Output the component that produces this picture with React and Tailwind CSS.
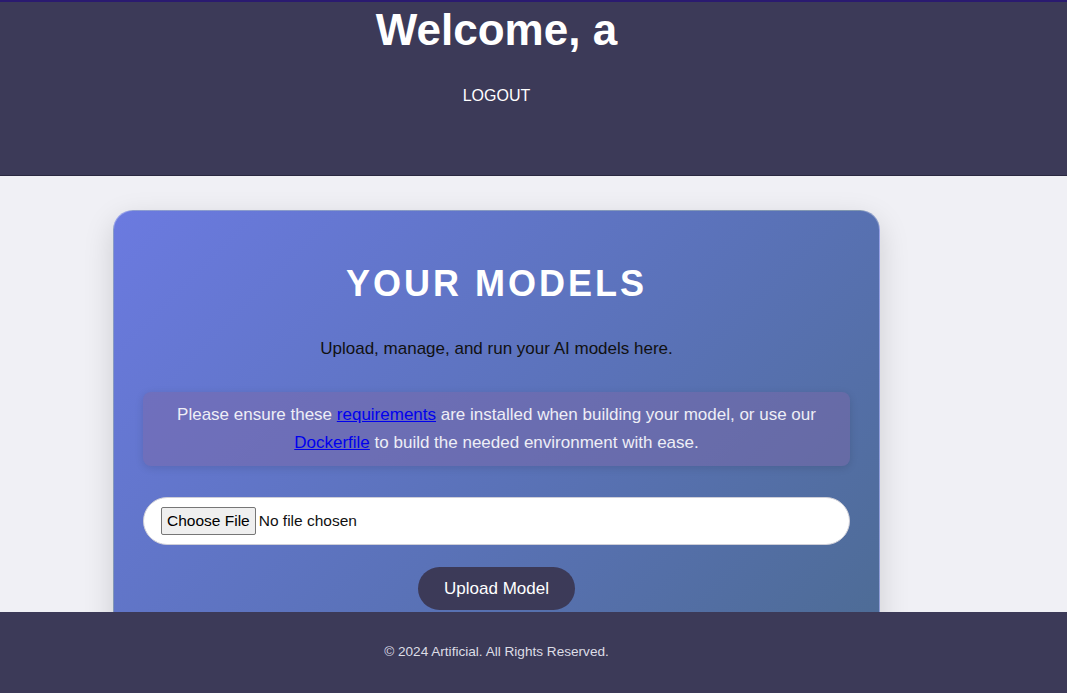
import React from "react";

const font = { fontFamily: '"Liberation Sans", Arial, sans-serif' };

const Header = () => (
  <header className="bg-[#3c3a58] border-t-2 border-t-[#2a1a70] border-b border-b-[#2a2840] h-[176px]">
    <div className="w-[993px] flex flex-col items-center">
      <h1 className="text-[44px] font-bold text-white leading-[52px] mt-[2px]">Welcome, a</h1>
      <button className="mt-[30px] text-white text-[16px] leading-[20px] uppercase">Logout</button>
    </div>
  </header>
);

const ModelsCard = () => (
  <div className="w-[767px] mx-auto mt-[34px] rounded-[20px] border border-white/30 bg-[linear-gradient(135deg,#6b7ae0_0%,#5a72b8_50%,#4a6a8c_100%)] shadow-[0_10px_30px_rgba(0,0,0,0.15)] px-[29px] pt-[51px] pb-[40px] flex flex-col items-center">
    <h2 className="text-[36px] font-bold text-white tracking-[3px] leading-[44px]">YOUR MODELS</h2>
    <p className="mt-[32px] text-[17px] text-[#111] leading-[22px]">
      Upload, manage, and run your AI models here.
    </p>
    <div className="mt-[32px] w-full rounded-[8px] bg-[#7a68a8]/50 shadow-[0_2px_8px_rgba(0,0,0,0.12)] px-[20px] py-[9px] text-center text-[17px] leading-[28px] text-[#eeeef6]">
      Please ensure these{" "}
      <a href="#" className="text-[#0000ee] underline">requirements</a> are installed when
      building your model, or use our{" "}
      <a href="#" className="text-[#0000ee] underline">Dockerfile</a> to build the needed
      environment with ease.
    </div>
    <div className="mt-[31px] w-full h-[48px] rounded-[24px] bg-white border border-[#cfcfd8] flex items-center px-[17px]">
      <input
        type="file"
        className="text-[15.5px] text-[#111] file:text-[15.5px] file:text-black file:bg-[#efefef] file:border file:border-[#767676] file:rounded-[2px] file:px-[5px] file:py-[1px] file:mr-[3px]"
        style={font}
      />
    </div>
    <button className="mt-[22px] h-[43px] px-[26px] rounded-[22px] bg-[#3c3a58] text-white text-[17px]">
      Upload Model
    </button>
    <div className="h-[120px]" />
  </div>
);

const Footer = () => (
  <footer className="fixed bottom-0 left-0 right-0 h-[81px] bg-[#3c3a58]">
    <div className="w-[993px] h-full flex items-center justify-center">
      <p className="text-[13.6px] text-[#dddde6]">© 2024 Artificial. All Rights Reserved.</p>
    </div>
  </footer>
);

export default function App() {
  return (
    <div className="min-h-screen bg-[#f0f0f5]" style={font}>
      <Header />
      <div className="w-[993px]">
        <ModelsCard />
      </div>
      <Footer />
    </div>
  );
}
